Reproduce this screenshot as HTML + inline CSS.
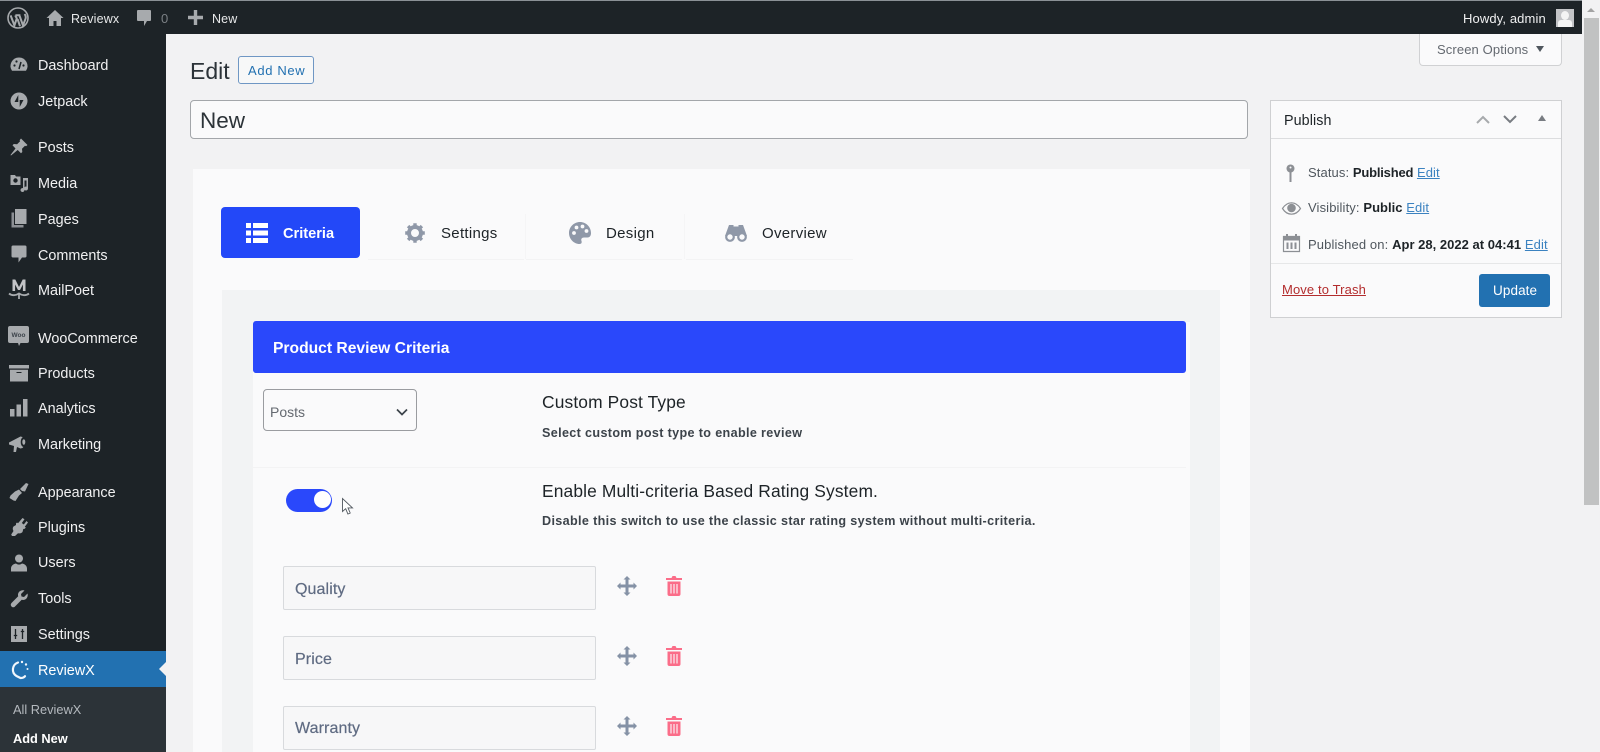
<!DOCTYPE html>
<html lang="en"><head><meta charset="utf-8"><title>Edit</title>
<style>
*{box-sizing:border-box}
html,body{margin:0;padding:0;width:1600px;height:752px;overflow:hidden;background:#f2f2f3}
body{position:relative;font-family:"Liberation Sans",Arial,sans-serif;color:#1d2327}
.a{position:absolute}
.t{position:absolute;white-space:nowrap;line-height:20px;height:20px}
svg{position:absolute;display:block;overflow:visible}
.m{color:#f0f0f1;font-size:14.4px;left:38px}
.b{font-weight:700}
.g{color:#50575e}
.l{color:#3b82c0;text-decoration:underline}
.h{font-size:17.4px;color:#1d2327;letter-spacing:.13px;left:542px}
.s{font-size:12.6px;font-weight:700;color:#3c434a;left:542px;letter-spacing:.35px}
.i{position:absolute;left:283px;width:313px;height:44px;background:#f7f7f8;border:1px solid #d8dadd;border-radius:2px}
.it{position:absolute;left:295px;font-size:16px;color:#5f6b82;white-space:nowrap;line-height:20px;letter-spacing:.1px;-webkit-text-stroke:.2px #5f6b82}
.tab{font-size:15px;color:#1d2327;letter-spacing:.3px}
</style></head><body>

<!-- panels -->
<div class="a" style="left:193px;top:169px;width:1057px;height:583px;background:#fafafb"></div>
<div class="a" style="left:222px;top:290px;width:998px;height:462px;background:#f2f3f4"></div>
<div class="a" style="left:253px;top:322px;width:937px;height:430px;background:#fafafb"></div>

<!-- top bar -->
<div class="a" style="left:0;top:0;width:1582px;height:1px;background:#8b9196"></div>
<div class="a" style="left:0;top:1px;width:1582px;height:33px;background:#1d2327"></div>
<!-- sidebar -->
<div class="a" style="left:0;top:34px;width:166px;height:718px;background:#1d2327"></div>
<div class="a" style="left:0;top:651px;width:166px;height:36px;background:#2271b1"></div>
<div class="a" style="left:0;top:687px;width:166px;height:65px;background:#2c3338"></div>
<div class="a" style="left:159px;top:661px;width:0;height:0;border:8px solid transparent;border-left:0;border-right:8px solid #f2f2f3"></div>

<!-- top bar content -->
<svg style="left:7px;top:7px" width="22" height="22" viewBox="0 0 22 22"><circle cx="11" cy="11" r="10" fill="none" stroke="#a7aaad" stroke-width="1.6"/><path d="M3.600 8.400l3.800 10 2.400-7-1.600-3M8.400 8.200h5M12.400 8.400l3.600 10 2.600-6.800c.6-2-.2-3.400-1-4.600M10.600 12.200l2.400 7" fill="none" stroke="#a7aaad" stroke-width="2"/></svg>
<svg style="left:46px;top:9px" width="18" height="18" viewBox="0 0 18 18"><path d="M9 1L.5 9h2.500v8h4.500v-5h3v5H15V9h2.500z" fill="#a7aaad"/></svg>
<div class="t" style="left:71px;top:9px;font-size:12.5px;color:#e8e9ea;letter-spacing:.15px">Reviewx</div>
<svg style="left:136px;top:9px" width="16" height="18" viewBox="0 0 16 18"><path d="M2 1h12a1 1 0 0 1 1 1v9a1 1 0 0 1-1 1h-3l-3 5v-5H2a1 1 0 0 1-1-1V2a1 1 0 0 1 1-1z" fill="#a7aaad"/></svg>
<div class="t" style="left:161px;top:9px;font-size:13px;color:#7b8085">0</div>
<svg style="left:188px;top:10px" width="15" height="15" viewBox="0 0 15 15"><path d="M5.800 0h3.400v5.800H15v3.400H9.200V15H5.800V9.200H0V5.800h5.800z" fill="#a7aaad"/></svg>
<div class="t" style="left:212px;top:9px;font-size:12.5px;color:#e8e9ea;letter-spacing:.15px">New</div>
<div class="t" style="left:1463px;top:9px;font-size:13px;color:#f0f0f1;letter-spacing:.12px">Howdy, admin</div>
<div class="a" style="left:1556px;top:9px;width:18px;height:18px;background:#c3c4c7;overflow:hidden"><div class="a" style="left:5px;top:2px;width:8px;height:9px;border-radius:50%;background:#f4f4f4"></div><div class="a" style="left:2px;top:11px;width:14px;height:7px;background:#f4f4f4;border-radius:3px 3px 0 0"></div></div>

<!-- sidebar icons -->
<svg style="left:10px;top:56px" width="18" height="18" viewBox="0 0 18 18"><path d="M9 1.500a8.500 8.500 0 0 0-7 13.300h14A8.500 8.500 0 0 0 9 1.500z" fill="#a7aaad"/><path d="M9 13l2-7" stroke="#1d2327" stroke-width="1.500"/><circle cx="4.500" cy="9.500" r="1.100" fill="#1d2327"/><circle cx="6.500" cy="5.500" r="1.100" fill="#1d2327"/><circle cx="13.500" cy="9.500" r="1.100" fill="#1d2327"/></svg>
<svg style="left:10px;top:92px" width="18" height="18" viewBox="0 0 18 18"><circle cx="9" cy="9" r="8.500" fill="#a7aaad"/><path d="M8.300 3v7H4.500zM9.700 15V8h3.800z" fill="#1d2327"/></svg>
<svg style="left:10px;top:138px" width="18" height="18" viewBox="0 0 18 18"><path d="M11 .5l6.500 6.500-1.500 1.200-1-.5-3 3 .3 3.300-1.300 1.300-3.300-3.300L1 17.500l-.5-.5 5-6.500L2.500 7.300l1.300-1.300 3.300.3 3-3-.5-1z" fill="#a7aaad"/></svg>
<svg style="left:9px;top:174px" width="20" height="18" viewBox="0 0 20 18"><path d="M1.500 1H6l1 1.500h4.500V11H1.500z" fill="#a7aaad"/><circle cx="6.500" cy="6.500" r="2.200" fill="#1d2327"/><path d="M14 4h5v10.500a2 2 0 1 1-1.500-1.900V6.500h-2v9.500a2 2 0 1 1-1.500-1.900z" fill="#a7aaad"/></svg>
<svg style="left:11px;top:209px" width="16" height="19" viewBox="0 0 16 19"><path d="M4 0h11.500v15H4z" fill="#a7aaad"/><path d="M.5 3.500H3V16h9.500v2.500H.5z" fill="#8c8f94"/></svg>
<svg style="left:11px;top:245px" width="16" height="18" viewBox="0 0 16 18"><path d="M2 .5h12a1.500 1.500 0 0 1 1.500 1.500v9a1.500 1.500 0 0 1-1.500 1.500h-3l-3.500 5v-5H2A1.500 1.500 0 0 1 .5 11V2A1.500 1.500 0 0 1 2 .5z" fill="#a7aaad"/></svg>
<svg style="left:8px;top:278px" width="22" height="22" viewBox="0 0 22 22"><path d="M4.500 1.500h2.800L11 9l3.700-7.500h2.800v11.500h-2.600V6.500L12 12h-2L7.100 6.500V13H4.500z" fill="#c3c4c7"/><path d="M1 15.500c3 2.500 7 2 10 0 3 2 7 2.500 10 0M11 16v5" fill="none" stroke="#a7aaad" stroke-width="1.800"/></svg>
<svg style="left:8px;top:326px" width="21" height="21" viewBox="0 0 21 21"><path d="M2 0h17a2 2 0 0 1 2 2v13a2 2 0 0 1-2 2h-6.500l-1.500 3-1-3H2a2 2 0 0 1-2-2V2a2 2 0 0 1 2-2z" fill="#a7aaad"/><text x="10.500" y="11" font-size="6.500" font-weight="700" text-anchor="middle" fill="#3c434a" font-family="Liberation Sans">Woo</text></svg>
<svg style="left:9px;top:365px" width="20" height="17" viewBox="0 0 20 17"><path d="M0 0h20v3.500H0z" fill="#a7aaad"/><path d="M1 4.800h18V16.500H1z" fill="#a7aaad"/><path d="M7.500 7.500h5" stroke="#1d2327" stroke-width="1"/></svg>
<svg style="left:10px;top:398px" width="18" height="19" viewBox="0 0 18 19"><path d="M0 11h4.500v7.500H0zM6.500 6.500H11v12H6.500zM13 1h4.500v17.500H13z" fill="#a7aaad"/></svg>
<svg style="left:9px;top:434px" width="20" height="20" viewBox="0 0 20 20"><path d="M0 8.500L11.500 2.500l2 .5c3 3 3 8 0 11l-2 .5-3.500-1.500-1 5H4.500l.5-6-5-1.500z" fill="#a7aaad"/><ellipse cx="14.500" cy="8" rx="2.800" ry="5" fill="#1d2327"/><ellipse cx="14.800" cy="8" rx="1.500" ry="2.800" fill="#a7aaad"/></svg>
<svg style="left:9px;top:482px" width="20" height="20" viewBox="0 0 20 20"><path d="M11 7l6-6 2.500 1-3.500 7.500-3-.5zM10 7.500L13 11l-3 2.500-3.500 5.500-2-.5L.5 16l1-2.500L6 9.500z" fill="#a7aaad"/></svg>
<svg style="left:10px;top:518px" width="18" height="18" viewBox="0 0 18 18"><path d="M12.500 0L14.500 1.300 11.800 5l2 1.500 2.700-3.500L18 4.500l-3.200 4.300 1 .7-1 1.300-1.500.2-.8 3c-1 1.300-3 1.700-4.500 1.200L5 18H2l-.8-1.500L3.500 13c-1-1.500-1-3.300 0-4.500l2.500-1.500 0-1.500L7 4.500l1 .7z" fill="#a7aaad"/></svg>
<svg style="left:10px;top:554px" width="18" height="18" viewBox="0 0 18 18"><circle cx="9" cy="4.500" r="4" fill="#a7aaad"/><path d="M1 17.500v-3c0-2.500 2-4.500 5-5 2 1.500 4 1.500 6 0 3 .5 5 2.500 5 5v3z" fill="#a7aaad"/></svg>
<svg style="left:10px;top:590px" width="18" height="18" viewBox="0 0 18 18"><path d="M17.500 3.500c.8 2.500-.5 5.500-3 6.300-1 .3-2 .2-2.800 0L5 16.500c-1 1-2.500 1-3.500 0s-1-2.500 0-3.500l6.700-6.700c-.3-1-.3-2 0-2.800C9.100.9 12 -.3 14.500.5L11 4l.5 2.500L14 7z" fill="#a7aaad"/></svg>
<svg style="left:11px;top:626px" width="16" height="16" viewBox="0 0 16 16"><path d="M0 0h16v16H0z" fill="#a7aaad"/><path d="M4.500 3v10M11.500 3v10M2.800 9.500h3.400M9.800 5.500h3.400" stroke="#1d2327" stroke-width="1.300"/></svg>
<svg style="left:11px;top:660px" width="20" height="20" viewBox="0 0 20 20"><path d="M7 2.500a7.500 7.500 0 0 0-1.500 13.500l4 2c2 0 3.500-.7 4.500-1.800" fill="none" stroke="#f0f6fc" stroke-width="2.200" stroke-linecap="round"/><circle cx="11" cy="2" r="1.200" fill="#f0f6fc"/><circle cx="15" cy="4.500" r="1.200" fill="#f0f6fc"/><circle cx="16.500" cy="9" r="1" fill="#f0f6fc"/></svg>

<!-- sidebar text -->
<div class="t m" style="top:56px">Dashboard</div>
<div class="t m" style="top:92px">Jetpack</div>
<div class="t m" style="top:138px">Posts</div>
<div class="t m" style="top:174px">Media</div>
<div class="t m" style="top:210px">Pages</div>
<div class="t m" style="top:246px">Comments</div>
<div class="t m" style="top:281px">MailPoet</div>
<div class="t m" style="top:329px">WooCommerce</div>
<div class="t m" style="top:364px">Products</div>
<div class="t m" style="top:399px">Analytics</div>
<div class="t m" style="top:435px">Marketing</div>
<div class="t m" style="top:483px">Appearance</div>
<div class="t m" style="top:518px">Plugins</div>
<div class="t m" style="top:553px">Users</div>
<div class="t m" style="top:589px">Tools</div>
<div class="t m" style="top:625px">Settings</div>
<div class="t m" style="top:661px;color:#fff">ReviewX</div>
<div class="t" style="left:13px;top:700px;font-size:12.8px;color:#b4b9be">All ReviewX</div>
<div class="t b" style="left:13px;top:729px;font-size:12.8px;color:#fff">Add New</div>

<!-- heading -->
<div class="t" style="left:190px;top:58px;height:26px;line-height:26px;font-size:23px;color:#2c3338">Edit</div>
<div class="a" style="left:238px;top:56px;width:76px;height:28px;border:1px solid #6f97c4;border-radius:3px;background:#f7f8f8"></div>
<div class="t" style="left:248px;top:61px;font-size:13px;color:#2271b1;letter-spacing:.65px">Add New</div>
<div class="a" style="left:1419px;top:34px;width:143px;height:32px;background:#fafafb;border:1px solid #d0d1d3;border-top:0;border-radius:0 0 4px 4px"></div>
<div class="t" style="left:1437px;top:40px;font-size:13px;color:#646970;letter-spacing:.12px">Screen Options</div>
<div class="a" style="left:1536px;top:46px;width:0;height:0;border:4.5px solid transparent;border-top:6px solid #50575e;border-bottom:0"></div>
<div class="a" style="left:190px;top:100px;width:1058px;height:39px;background:#fafafb;border:1px solid #a3a6aa;border-radius:4px"></div>
<div class="t" style="left:200px;top:108px;height:26px;line-height:26px;font-size:22.5px;color:#2c3338">New</div>

<!-- tabs -->
<div class="a" style="left:221px;top:207px;width:139px;height:51px;background:#2348f8;border-radius:4px"></div>
<svg style="left:246px;top:223px" width="22" height="20" viewBox="0 0 22 20"><path d="M0 0h5v5H0zM7 0h15v5H7zM0 7.500h5v5H0zM7 7.500h15v5H7zM0 15h5v5H0zM7 15h15v5H7z" fill="#fff"/></svg>
<div class="t b" style="left:283px;top:224px;font-size:14.6px;color:#fff">Criteria</div>
<div class="a" style="left:368px;top:259px;width:156px;height:1px;background:#f3f3f4"></div>
<div class="a" style="left:526px;top:259px;width:156px;height:1px;background:#f3f3f4"></div>
<div class="a" style="left:686px;top:259px;width:167px;height:1px;background:#f3f3f4"></div>
<div class="a" style="left:525px;top:214px;width:1px;height:45px;background:#f5f5f6"></div>
<div class="a" style="left:684px;top:214px;width:1px;height:45px;background:#f5f5f6"></div>
<svg style="left:404px;top:222px" width="22" height="22" viewBox="0 0 22 22"><circle cx="11" cy="11" r="6" fill="none" stroke="#8f98a8" stroke-width="4"/><path d="M11 1.200v3.600M11 17.200v3.600M1.200 11h3.600M17.200 11h3.600M4.100 4.100l2.500 2.500M15.400 15.400l2.500 2.500M4.100 17.900l2.500-2.500M15.400 6.600l2.500-2.500" stroke="#8f98a8" stroke-width="3.400"/></svg>
<div class="t tab" style="left:441px;top:224px">Settings</div>
<svg style="left:569px;top:222px" width="22" height="22" viewBox="0 0 22 22"><path d="M11 0C5 0 0 5 0 11s5 11 10.500 11c2 0 2.500-1.500 2-3-.7-2 .3-3.500 2.500-3.500h3.500C20.500 15.500 22 14 22 11 22 5 17 0 11 0z" fill="#8f98a8"/><circle cx="5" cy="11" r="1.900" fill="#fafafb"/><circle cx="7.500" cy="5.500" r="1.900" fill="#fafafb"/><circle cx="13.500" cy="4.500" r="1.900" fill="#fafafb"/><circle cx="17.500" cy="9" r="1.900" fill="#fafafb"/></svg>
<div class="t tab" style="left:606px;top:224px">Design</div>
<svg style="left:725px;top:224px" width="22" height="18" viewBox="0 0 22 18"><path d="M4 1h4.500v1.500h5V1H18l4 11H0z" fill="#8f98a8"/><circle cx="5" cy="13" r="3.800" fill="#fafafb" stroke="#8f98a8" stroke-width="2.200"/><circle cx="17" cy="13" r="3.800" fill="#fafafb" stroke="#8f98a8" stroke-width="2.200"/></svg>
<div class="t tab" style="left:762px;top:224px">Overview</div>

<!-- criteria header -->
<div class="a" style="left:253px;top:321px;width:933px;height:52px;background:#2a48fb;border-radius:3px"></div>
<div class="t b" style="left:273px;top:338px;font-size:15.65px;color:#fff;margin-top:1px">Product Review Criteria</div>

<!-- select -->
<div class="a" style="left:263px;top:389px;width:154px;height:42px;border:1px solid #9a9ca0;border-radius:4px;background:#fafafb"></div>
<div class="t" style="left:270px;top:402px;font-size:14px;color:#646970">Posts</div>
<svg style="left:396px;top:408px" width="12" height="8" viewBox="0 0 12 8"><path d="M1 1.500l5 5 5-5" fill="none" stroke="#3c434a" stroke-width="1.700"/></svg>
<div class="t h" style="top:392px">Custom Post Type</div>
<div class="t s" style="top:423px">Select custom post type to enable review</div>
<div class="a" style="left:253px;top:467px;width:933px;height:1px;background:#f3f3f4"></div>

<!-- toggle -->
<div class="a" style="left:286px;top:489px;width:46px;height:23px;border-radius:12px;background:#2a48fb"></div>
<div class="a" style="left:314px;top:491px;width:17px;height:17px;border-radius:50%;background:#fff"></div>
<svg style="left:342px;top:498px" width="12" height="17" viewBox="0 0 12 17"><path d="M.5.500v13l3.200-2.800 2.200 5.300 2.300-1-2.200-5.100h4.500z" fill="#fff" stroke="#50575e" stroke-width=".9"/></svg>
<div class="t h" style="top:481px">Enable Multi-criteria Based Rating System.</div>
<div class="t s" style="top:511px">Disable this switch to use the classic star rating system without multi-criteria.</div>

<!-- inputs -->
<div class="i" style="top:566px"></div><div class="it" style="top:580px">Quality</div>
<div class="i" style="top:636px"></div><div class="it" style="top:650px">Price</div>
<div class="i" style="top:706px"></div><div class="it" style="top:719px">Warranty</div>

<svg style="left:617px;top:576px" width="20" height="20" viewBox="0 0 20 20"><path d="M10 0l3.500 3.500h-2v5h5v-2L20 10l-3.500 3.500v-2h-5v5h2L10 20l-3.500-3.500h2v-5h-5v2L0 10l3.500-3.500v2h5v-5h-2z" fill="#8592a6"/></svg>
<svg style="left:617px;top:646px" width="20" height="20" viewBox="0 0 20 20"><path d="M10 0l3.500 3.500h-2v5h5v-2L20 10l-3.500 3.500v-2h-5v5h2L10 20l-3.500-3.500h2v-5h-5v2L0 10l3.500-3.500v2h5v-5h-2z" fill="#8592a6"/></svg>
<svg style="left:617px;top:716px" width="20" height="20" viewBox="0 0 20 20"><path d="M10 0l3.500 3.500h-2v5h5v-2L20 10l-3.500 3.500v-2h-5v5h2L10 20l-3.500-3.500h2v-5h-5v2L0 10l3.500-3.500v2h5v-5h-2z" fill="#8592a6"/></svg>
<svg style="left:666px;top:575px" width="16" height="21" viewBox="0 0 16 21"><path d="M0 3h5.500L6.500 1h3l1 2H16v2H0zM1.500 6.500h13V19a2 2 0 0 1-2 2h-9a2 2 0 0 1-2-2z" fill="#fb6d89"/><path d="M5 9v9.500M8 9v9.500M11 9v9.500" stroke="#fafafb" stroke-width="1.100"/></svg>
<svg style="left:666px;top:645px" width="16" height="21" viewBox="0 0 16 21"><path d="M0 3h5.500L6.500 1h3l1 2H16v2H0zM1.500 6.500h13V19a2 2 0 0 1-2 2h-9a2 2 0 0 1-2-2z" fill="#fb6d89"/><path d="M5 9v9.500M8 9v9.500M11 9v9.500" stroke="#fafafb" stroke-width="1.100"/></svg>
<svg style="left:666px;top:715px" width="16" height="21" viewBox="0 0 16 21"><path d="M0 3h5.500L6.500 1h3l1 2H16v2H0zM1.500 6.500h13V19a2 2 0 0 1-2 2h-9a2 2 0 0 1-2-2z" fill="#fb6d89"/><path d="M5 9v9.500M8 9v9.500M11 9v9.500" stroke="#fafafb" stroke-width="1.100"/></svg>

<!-- publish box -->
<div class="a" style="left:1270px;top:100px;width:292px;height:218px;background:#fafafb;border:1px solid #cfd0d2"></div>
<div class="a" style="left:1271px;top:138px;width:290px;height:1px;background:#dcdddf"></div>
<div class="t" style="left:1284px;top:111px;font-size:14.3px;color:#1d2327;letter-spacing:.1px">Publish</div>
<svg style="left:1476px;top:115px" width="14" height="9" viewBox="0 0 14 9"><path d="M1 8l6-6 6 6" fill="none" stroke="#a7aaad" stroke-width="2"/></svg>
<svg style="left:1503px;top:115px" width="14" height="9" viewBox="0 0 14 9"><path d="M1 1l6 6 6-6" fill="none" stroke="#787c82" stroke-width="2"/></svg>
<div class="a" style="left:1538px;top:115px;width:0;height:0;border:4px solid transparent;border-bottom:6px solid #787c82;border-top:0"></div>
<svg style="left:1286px;top:164px" width="9" height="18" viewBox="0 0 9 18"><circle cx="4.500" cy="4.500" r="4" fill="#8c8f94"/><path d="M3.500 7h2v11h-2z" fill="#8c8f94"/><circle cx="4.500" cy="3.500" r="1" fill="#fafafb"/></svg>
<svg style="left:1282px;top:202px" width="19" height="13" viewBox="0 0 19 13"><path d="M.5 6.500C3 2.500 6 .8 9.500.8s6.500 1.700 9 5.700c-2.500 4-5.500 5.700-9 5.700S3 10.500.5 6.500z" fill="none" stroke="#8c8f94" stroke-width="1.200"/><circle cx="9.500" cy="6" r="4.300" fill="#8c8f94"/></svg>
<svg style="left:1283px;top:234px" width="17" height="18" viewBox="0 0 17 18"><path d="M.5 2.500h16V17.500H.5z" fill="none" stroke="#8c8f94" stroke-width="1.200"/><path d="M.5 2.500h16v4H.5zM3 0h2v3H3zM12 0h2v3h-2zM3.500 8.500h2V15h-2zM7.500 8.500h2V15h-2zM11.500 8.500h2V15h-2z" fill="#8c8f94"/></svg>
<div class="t g" style="left:1308px;top:163px;font-size:13px;letter-spacing:.1px">Status: <b style="color:#1d2327;letter-spacing:-.2px">Published</b> <span class="l">Edit</span></div>
<div class="t g" style="left:1308px;top:198px;font-size:13px;letter-spacing:.12px">Visibility: <b style="color:#1d2327;letter-spacing:.02px">Public</b> <span class="l">Edit</span></div>
<div class="t g" style="left:1308px;top:235px;font-size:13px;letter-spacing:.12px">Published on: <b style="color:#1d2327;letter-spacing:.02px">Apr 28, 2022 at 04:41</b> <span class="l">Edit</span></div>
<div class="a" style="left:1271px;top:263px;width:290px;height:1px;background:#e6e7e8"></div>
<div class="t" style="left:1282px;top:280px;font-size:13px;color:#b32d2e;text-decoration:underline;letter-spacing:.12px">Move to Trash</div>
<div class="a" style="left:1479px;top:274px;width:71px;height:33px;background:#2271b1;border-radius:3px"></div>
<div class="t" style="left:1493px;top:281px;font-size:13.5px;color:#fff;letter-spacing:.1px">Update</div>

<!-- scrollbar -->
<div class="a" style="left:1584px;top:0;width:16px;height:752px;background:#f2f2f3"></div>
<div class="a" style="left:1584px;top:18px;width:15px;height:487px;background:#c1c2c2"></div>
<div class="a" style="left:1587px;top:8px;width:0;height:0;border:4px solid transparent;border-bottom:4px solid #a3a3a3;border-top:0"></div>
</body></html>
